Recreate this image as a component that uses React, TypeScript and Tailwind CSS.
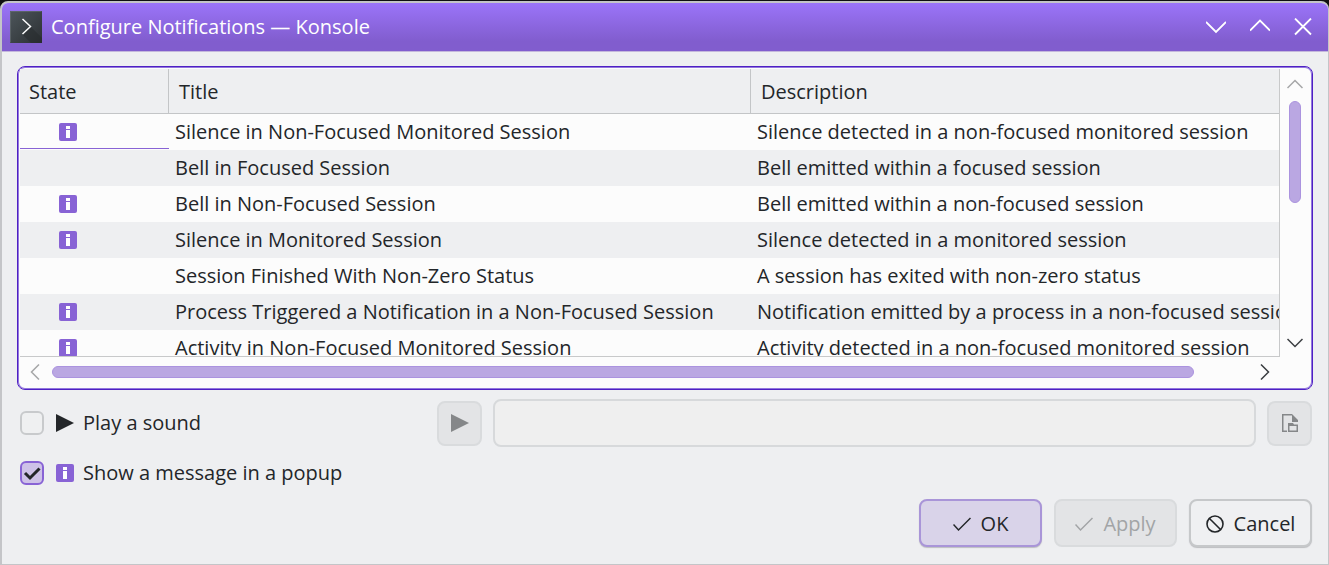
import { useState } from "react";

const events = [
  { popup: true, title: "Silence in Non-Focused Monitored Session", description: "Silence detected in a non-focused monitored session" },
  { popup: false, title: "Bell in Focused Session", description: "Bell emitted within a focused session" },
  { popup: true, title: "Bell in Non-Focused Session", description: "Bell emitted within a non-focused session" },
  { popup: true, title: "Silence in Monitored Session", description: "Silence detected in a monitored session" },
  { popup: false, title: "Session Finished With Non-Zero Status", description: "A session has exited with non-zero status" },
  { popup: true, title: "Process Triggered a Notification in a Non-Focused Session", description: "Notification emitted by a process in a non-focused session" },
  { popup: true, title: "Activity in Non-Focused Monitored Session", description: "Activity detected in a non-focused monitored session" },
];

function InfoIcon() {
  return (
    <svg width="18" height="18" viewBox="0 0 18 18" className="block shrink-0">
      <rect width="18" height="18" rx="2" fill="#8863d5" />
      <path d="M7 3h4v3H7zM7 7h4v8H7z" fill="#fff" />
    </svg>
  );
}

function PlayIcon() {
  return (
    <svg width="18" height="18" viewBox="0 0 18 18" className="block shrink-0" fill="currentColor">
      <path d="M0 0v18l18-9z" />
    </svg>
  );
}

function CheckIcon() {
  return (
    <svg width="18" height="18" viewBox="0 0 18 18" className="block shrink-0" fill="none" stroke="currentColor" strokeWidth="1.5">
      <path d="M.5 9.500L5.500 15L17.500 3" />
    </svg>
  );
}

function CancelIcon() {
  return (
    <svg width="18" height="18" viewBox="0 0 18 18" className="block shrink-0" fill="none" stroke="currentColor" strokeWidth="1.6">
      <circle cx="9" cy="9" r="8" />
      <path d="M3.200 3.200l11.600 11.600" />
    </svg>
  );
}

function FileIcon() {
  return (
    <svg width="16" height="18" viewBox="0 0 16 18" className="block" fill="currentColor">
      <path d="M0 0h10l6 6v2H10V1.500H1.500V16.500H5V18H0z" />
      <path d="M6 9h5l1 1.500h4V18H6zM7.500 12v4.500h7V12z" fillRule="evenodd" />
    </svg>
  );
}

function Chevron({ d, width, height }: { d: string; width: number; height: number }) {
  return (
    <svg width={width} height={height} viewBox={`0 0 ${width} ${height}`} className="block" fill="none" stroke="currentColor" strokeWidth="1.5">
      <path d={d} />
    </svg>
  );
}

function TitleBar() {
  return (
    <header className="flex h-[49px] shrink-0 items-center border-b border-[#c4b8dc] bg-linear-to-b from-[#9b74f9] to-[#815dce] to-80% pr-4 pl-2 text-white">
      <svg width="32" height="32" viewBox="0 0 32 32" className="mr-[9px] block shrink-0">
        <defs>
          <linearGradient id="konsole" x1="0" y1="0" x2="1" y2="1">
            <stop offset="0" stopColor="#4d565b" />
            <stop offset="1" stopColor="#2c3033" />
          </linearGradient>
        </defs>
        <rect width="32" height="32" fill="url(#konsole)" />
        <path d="M21 16L32 27v5H21l-8-8z" fill="#25292b" opacity=".5" />
        <path d="M.5 31.500V.5h31" fill="none" stroke="#697276" opacity=".6" />
        <path d="M12.500 8L20.500 15.500l-8 7.500" fill="none" stroke="#fcfcfc" strokeWidth="1.5" />
      </svg>
      <h1 className="flex-1">Configure Notifications — Konsole</h1>
      <div className="flex items-center gap-6">
        <button aria-label="Minimize">
          <svg width="20" height="18" viewBox="0 0 20 18" className="block" fill="none" stroke="currentColor" strokeWidth="1.8">
            <path d="M0 4L10 14L20 4" />
          </svg>
        </button>
        <button aria-label="Maximize">
          <svg width="20" height="18" viewBox="0 0 20 18" className="block" fill="none" stroke="currentColor" strokeWidth="1.8">
            <path d="M0 12.500L10 2.500L20 12.500" />
          </svg>
        </button>
        <button aria-label="Close">
          <svg width="18" height="18" viewBox="0 0 18 18" className="block" fill="none" stroke="currentColor" strokeWidth="1.8">
            <path d="M1 .5l16 16M17 .5L1 16.500" />
          </svg>
        </button>
      </div>
    </header>
  );
}

function EventTable() {
  return (
    <div className="min-h-0 min-w-0 flex-1 overflow-hidden border-r border-b border-[#c8c9ca]">
      <table className="w-[1300px] table-fixed border-separate border-spacing-0 text-left">
        <thead>
          <tr className="h-[45px] bg-[#eeeff1]">
            <th className="w-[149px] border-r border-b border-[#c3c5c7] pt-px pl-[9px] font-normal">State</th>
            <th className="w-[582px] border-r border-b border-[#c3c5c7] pt-px pl-[10px] font-normal">Title</th>
            <th className="border-b border-[#c3c5c7] pt-px pl-[10px] font-normal">Description</th>
          </tr>
        </thead>
        <tbody>
          {events.map((event, i) => (
            <tr key={event.title} className="h-9 even:bg-[#eeeff1]">
              <td className={i === 0 ? "pl-[39px] shadow-[inset_0_-1px_#fcfcfc,inset_0_-2px_#8863d5]" : "pl-[39px]"}>
                {event.popup && <InfoIcon />}
              </td>
              <td className="pl-[6px] whitespace-nowrap">{event.title}</td>
              <td className="pl-[6px] whitespace-nowrap">{event.description}</td>
            </tr>
          ))}
        </tbody>
      </table>
    </div>
  );
}

function EventList() {
  return (
    <section className="flex min-h-0 flex-1 flex-col rounded-lg border border-[#4f20c4] bg-[#fcfcfc] pt-[2px] pr-px pb-px pl-[2px] shadow-[inset_0_0_0_1px_#9277dd]">
      <div className="flex min-h-0 flex-1">
        <EventTable />
        <div className="flex w-[31px] shrink-0 flex-col items-center pt-[10px] pr-px pb-[9px]">
          <button aria-label="Scroll up" className="text-[#a5a6a7]">
            <Chevron width={16} height={10} d="M.5 9L8 1.500L15.500 9" />
          </button>
          <div className="mt-3 flex w-3 flex-1 flex-col">
            <div className="h-[43%] rounded-full border border-[#ab93df] bg-[#baa7e2]" />
          </div>
          <button aria-label="Scroll down" className="text-[#3a3d40]">
            <Chevron width={16} height={10} d="M.5 1L8 8.500L15.500 1" />
          </button>
        </div>
      </div>
      <div className="flex h-[31px] shrink-0 items-center pr-[41px] pb-px pl-[10px]">
        <button aria-label="Scroll left" className="text-[#a5a6a7]">
          <Chevron width={10} height={16} d="M9 .5L1.500 8L9 15.500" />
        </button>
        <div className="ml-3 flex h-3 flex-1 pr-[6px]">
          <div className="w-[95%] rounded-full border border-[#ab93df] bg-[#baa7e2]" />
        </div>
        <button aria-label="Scroll right" className="text-[#3a3d40]">
          <Chevron width={10} height={16} d="M1 .5L8.500 8L1 15.500" />
        </button>
      </div>
    </section>
  );
}

const checkbox = "col-start-1 row-start-1 size-6 appearance-none rounded-md border-2 border-[#c8cacc] bg-[#eff0f1] checked:border-[#8863d5] checked:bg-[#cec2e8]";

export default function App() {
  const [sound, setSound] = useState(false);
  const [popup, setPopup] = useState(true);

  return (
    <div className="h-screen bg-[#101012] pt-px font-['Open_Sans','Noto_Sans',sans-serif] text-[20px] leading-7 text-[#232629]">
      <div className="flex h-full flex-col overflow-hidden rounded-t-lg border-2 border-r border-b border-[#c4c5c8] bg-[#eeeff1]">
        <TitleBar />
        <main className="flex min-h-0 flex-1 flex-col px-[15px] pt-[14px] pb-[17px]">
          <EventList />

          <div className="mt-[9px] flex h-12 items-center pl-[3px]">
            <label className="flex w-[417px] shrink-0 items-center">
              <input type="checkbox" className={checkbox} checked={sound} onChange={(e) => setSound(e.target.checked)} />
              <span className="mr-[9px] ml-3">
                <PlayIcon />
              </span>
              Play a sound
            </label>
            <button disabled aria-label="Play" className="mr-[11px] flex h-[45px] w-[45px] shrink-0 items-center justify-center rounded-lg border-2 border-[#d9dbdd] bg-[#e3e4e6] text-[#858789]">
              <PlayIcon />
            </button>
            <input disabled aria-label="Sound file" className="h-12 min-w-0 flex-1 rounded-lg border-2 border-[#d7d9db] bg-[#efefef] px-3" />
            <button disabled aria-label="Choose sound file" className="mr-px ml-[11px] flex h-[45px] w-[45px] shrink-0 items-center justify-center rounded-lg border-2 border-[#d9dbdd] bg-[#e3e4e6] text-[#858789]">
              <FileIcon />
            </button>
          </div>

          <div className="mt-3 flex pl-[3px]">
            <label className="flex items-center">
              <span className="grid place-items-center">
                <input type="checkbox" className={checkbox} checked={popup} onChange={(e) => setPopup(e.target.checked)} />
                {popup && (
                  <svg width="18" height="18" viewBox="0 0 18 18" className="pointer-events-none col-start-1 row-start-1" fill="none" stroke="#232629" strokeWidth="3">
                    <path d="M2 9L7 14L16.500 4.500" />
                  </svg>
                )}
              </span>
              <span className="mr-[9px] ml-3">
                <InfoIcon />
              </span>
              Show a message in a popup
            </label>
          </div>

          <div className="mt-3 flex justify-end gap-3 pr-px">
            <button className="flex h-12 w-[123px] items-center justify-center gap-[10px] rounded-lg border-2 border-[#a995d8] bg-[#d9d3e9] pt-[2px] shadow-[0_1px_1px_#bcbdc0]">
              <CheckIcon />
              OK
            </button>
            <button disabled className="flex h-12 w-[123px] items-center justify-center gap-[10px] rounded-lg border-2 border-[#d9dbdd] bg-[#e3e4e6] pt-[2px] text-[#a2a4a6]">
              <CheckIcon />
              Apply
            </button>
            <button className="flex h-12 w-[123px] items-center justify-center gap-[10px] rounded-lg border-2 border-[#c6c8ca] bg-[#eff0f2] pt-[2px] shadow-[0_1px_1px_#bcbdc0]">
              <CancelIcon />
              Cancel
            </button>
          </div>
        </main>
      </div>
    </div>
  );
}
